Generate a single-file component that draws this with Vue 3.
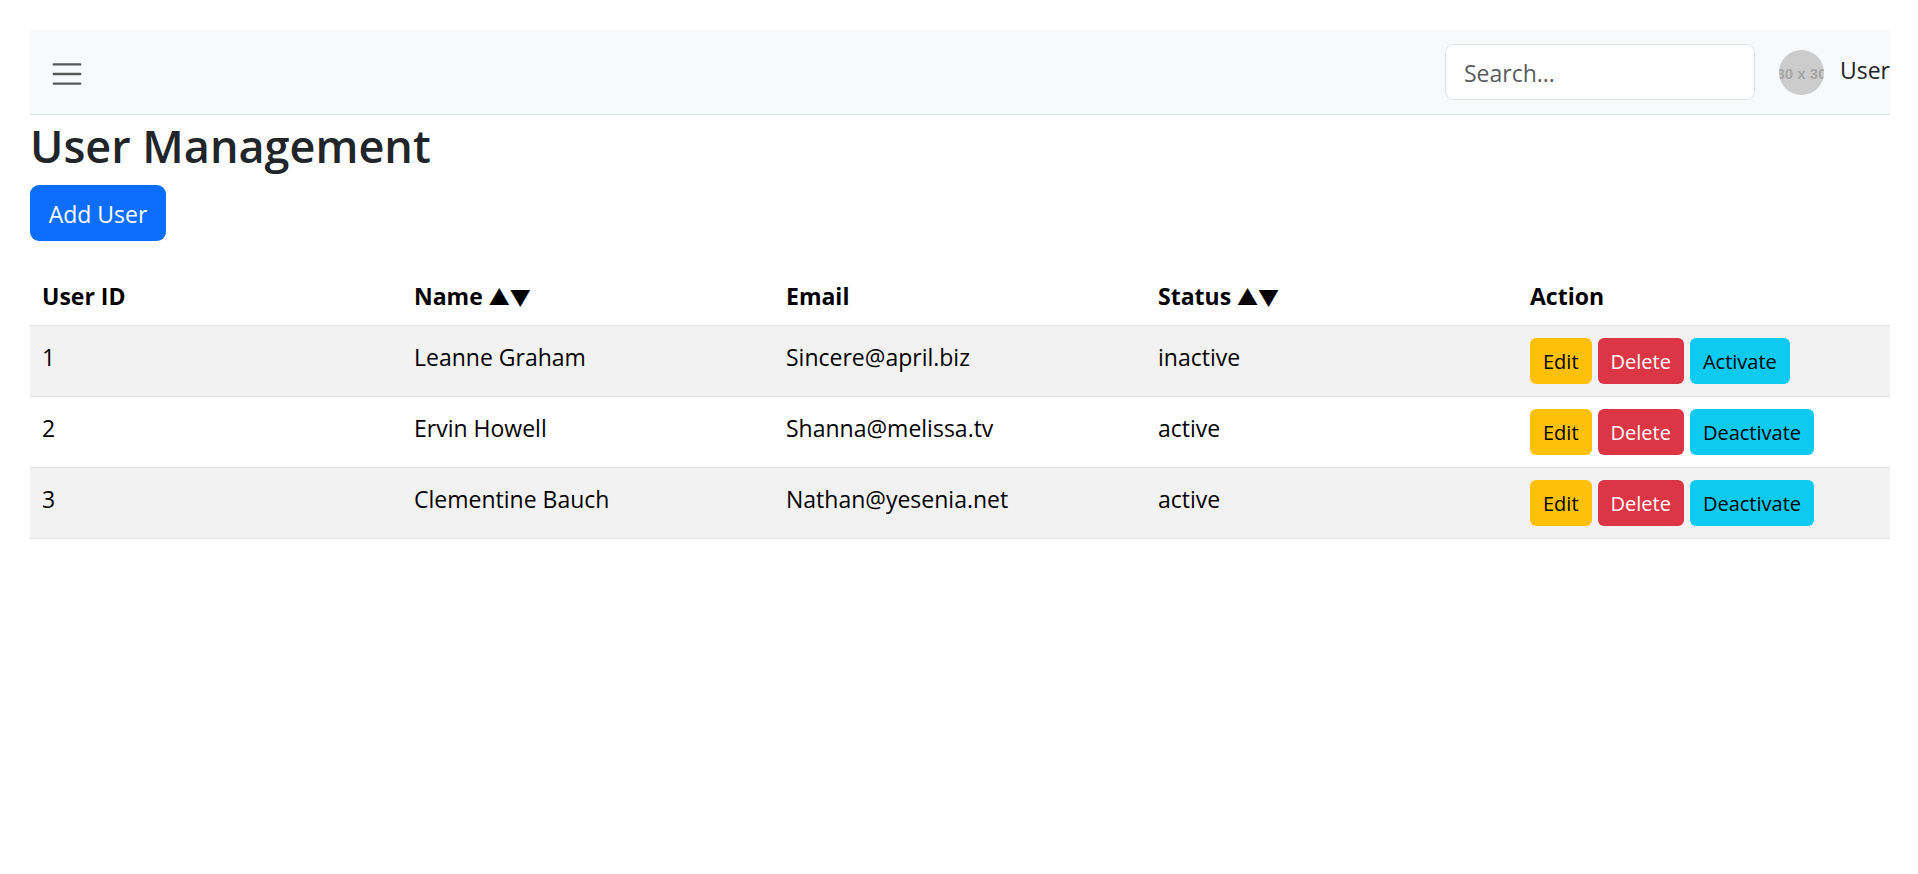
<script setup>
import { ref } from 'vue'

const search = ref('')
const users = ref([
  { id: 1, name: 'Leanne Graham', email: 'Sincere@april.biz', status: 'inactive' },
  { id: 2, name: 'Ervin Howell', email: 'Shanna@melissa.tv', status: 'active' },
  { id: 3, name: 'Clementine Bauch', email: 'Nathan@yesenia.net', status: 'active' },
])

const direction = { name: 1, status: 1 }
function sortBy(key) {
  users.value.sort((a, b) => a[key].localeCompare(b[key]) * direction[key])
  direction[key] *= -1
}
function toggle(user) {
  user.status = user.status === 'active' ? 'inactive' : 'active'
}
function remove(user) {
  users.value = users.value.filter((u) => u.id !== user.id)
}
</script>

<template>
  <div class="page">
    <header class="navbar">
      <button class="toggler" type="button" aria-label="Toggle navigation">
        <svg viewBox="0 0 30 30" width="36" height="36" aria-hidden="true">
          <path d="M4 7h22M4 15h22M4 23h22" fill="none" stroke="currentColor" stroke-width="2" stroke-linecap="round" stroke-miterlimit="10" />
        </svg>
      </button>
      <div class="nav-right">
        <input v-model="search" class="search" type="search" placeholder="Search..." aria-label="Search" />
        <div class="avatar"><span>30 x 30</span></div>
        <span class="user-name">User</span>
      </div>
    </header>

    <main>
      <h2>User Management</h2>
      <button class="btn add" type="button">Add User</button>

      <table>
        <thead>
          <tr>
            <th scope="col">User ID</th>
            <th scope="col"><button class="sort" type="button" @click="sortBy('name')">Name <span class="arrows">▲▼</span></button></th>
            <th scope="col">Email</th>
            <th scope="col"><button class="sort" type="button" @click="sortBy('status')">Status <span class="arrows">▲▼</span></button></th>
            <th scope="col">Action</th>
          </tr>
        </thead>
        <tbody>
          <tr v-for="user in users" :key="user.id">
            <td>{{ user.id }}</td>
            <td>{{ user.name }}</td>
            <td>{{ user.email }}</td>
            <td>{{ user.status }}</td>
            <td class="action-cell">
              <div class="actions">
                <button class="btn small edit" type="button">Edit</button>
                <button class="btn small delete" type="button" @click="remove(user)">Delete</button>
                <button class="btn small toggle" type="button" @click="toggle(user)">
                  {{ user.status === 'active' ? 'Deactivate' : 'Activate' }}
                </button>
              </div>
            </td>
          </tr>
        </tbody>
      </table>
    </main>
  </div>
</template>

<style>
body {
  background: #fff;
}
</style>

<style scoped>
.page {
  padding: 30px 28px 30px 30px;
  color: #212529;
  font-family: "Segoe UI", "Open Sans", "Noto Sans", sans-serif;
  font-size: 23px;
  line-height: 36px;
}
.page *,
.page {
  box-sizing: border-box;
}
button,
input {
  font: inherit;
  margin: 0;
}
button {
  cursor: pointer;
}
.navbar {
  display: flex;
  align-items: center;
  justify-content: space-between;
  padding: 14px 0;
  background: #f8f9fa;
  border-bottom: 1px solid #dee2e6;
}
.toggler {
  display: flex;
  padding: 10px 19px 6px;
  border: 0;
  background: none;
  color: rgba(0, 0, 0, 0.65);
}
.nav-right {
  display: flex;
  align-items: center;
}
.search {
  width: 310px;
  height: 56px;
  margin-right: 24px;
  padding: 2px 18px 0;
  border: 1px solid #dee2e6;
  border-radius: 9px;
  background: #fff;
  color: #212529;
}
.search::placeholder {
  color: #595c5f;
  opacity: 1;
}
.avatar {
  display: flex;
  align-items: center;
  justify-content: center;
  width: 45px;
  height: 45px;
  margin-right: 16px;
  border-radius: 50%;
  overflow: hidden;
  background: #ccc;
  color: #a6a6a6;
  font-family: "Liberation Sans", Arial, sans-serif;
  font-size: 15px;
  font-weight: 700;
  white-space: nowrap;
}
.avatar span {
  flex: none;
  padding-top: 4px;
}
.user-name {
  padding-bottom: 4px;
}
h2 {
  margin: 0 0 9px;
  font-size: 45px;
  font-weight: 600;
  line-height: 61px;
}
.btn {
  border: 0;
  border-radius: 9px;
}
.add {
  display: block;
  width: 136px;
  height: 56px;
  padding: 2px 0 0;
  background: #0d6efd;
  color: #fff;
}
table {
  width: 100%;
  margin-top: 24px;
  border-collapse: collapse;
  table-layout: fixed;
  color: #000;
}
th,
td {
  padding: 13px 12px 11px;
  border-bottom: 1px solid #dee2e6;
  text-align: left;
  vertical-align: top;
}
th {
  font-weight: 700;
}
.action-cell {
  padding: 12px;
}
tbody tr:nth-child(odd) {
  background: #f2f2f2;
}
.sort {
  display: block;
  height: 36px;
  padding: 0;
  border: 0;
  background: none;
  color: inherit;
}
.arrows {
  font-family: "Noto Sans CJK JP", "DejaVu Sans", sans-serif;
  font-size: 21px;
  font-weight: 400;
  line-height: 1;
}
.actions {
  display: flex;
  gap: 6px;
}
.small {
  height: 46px;
  padding: 2px 13px 0;
  border-radius: 6px;
  font-size: 20px;
}
.edit {
  background: #ffc107;
  color: #000;
}
.delete {
  background: #dc3545;
  color: #fff;
}
.toggle {
  background: #0dcaf0;
  color: #000;
}
</style>
